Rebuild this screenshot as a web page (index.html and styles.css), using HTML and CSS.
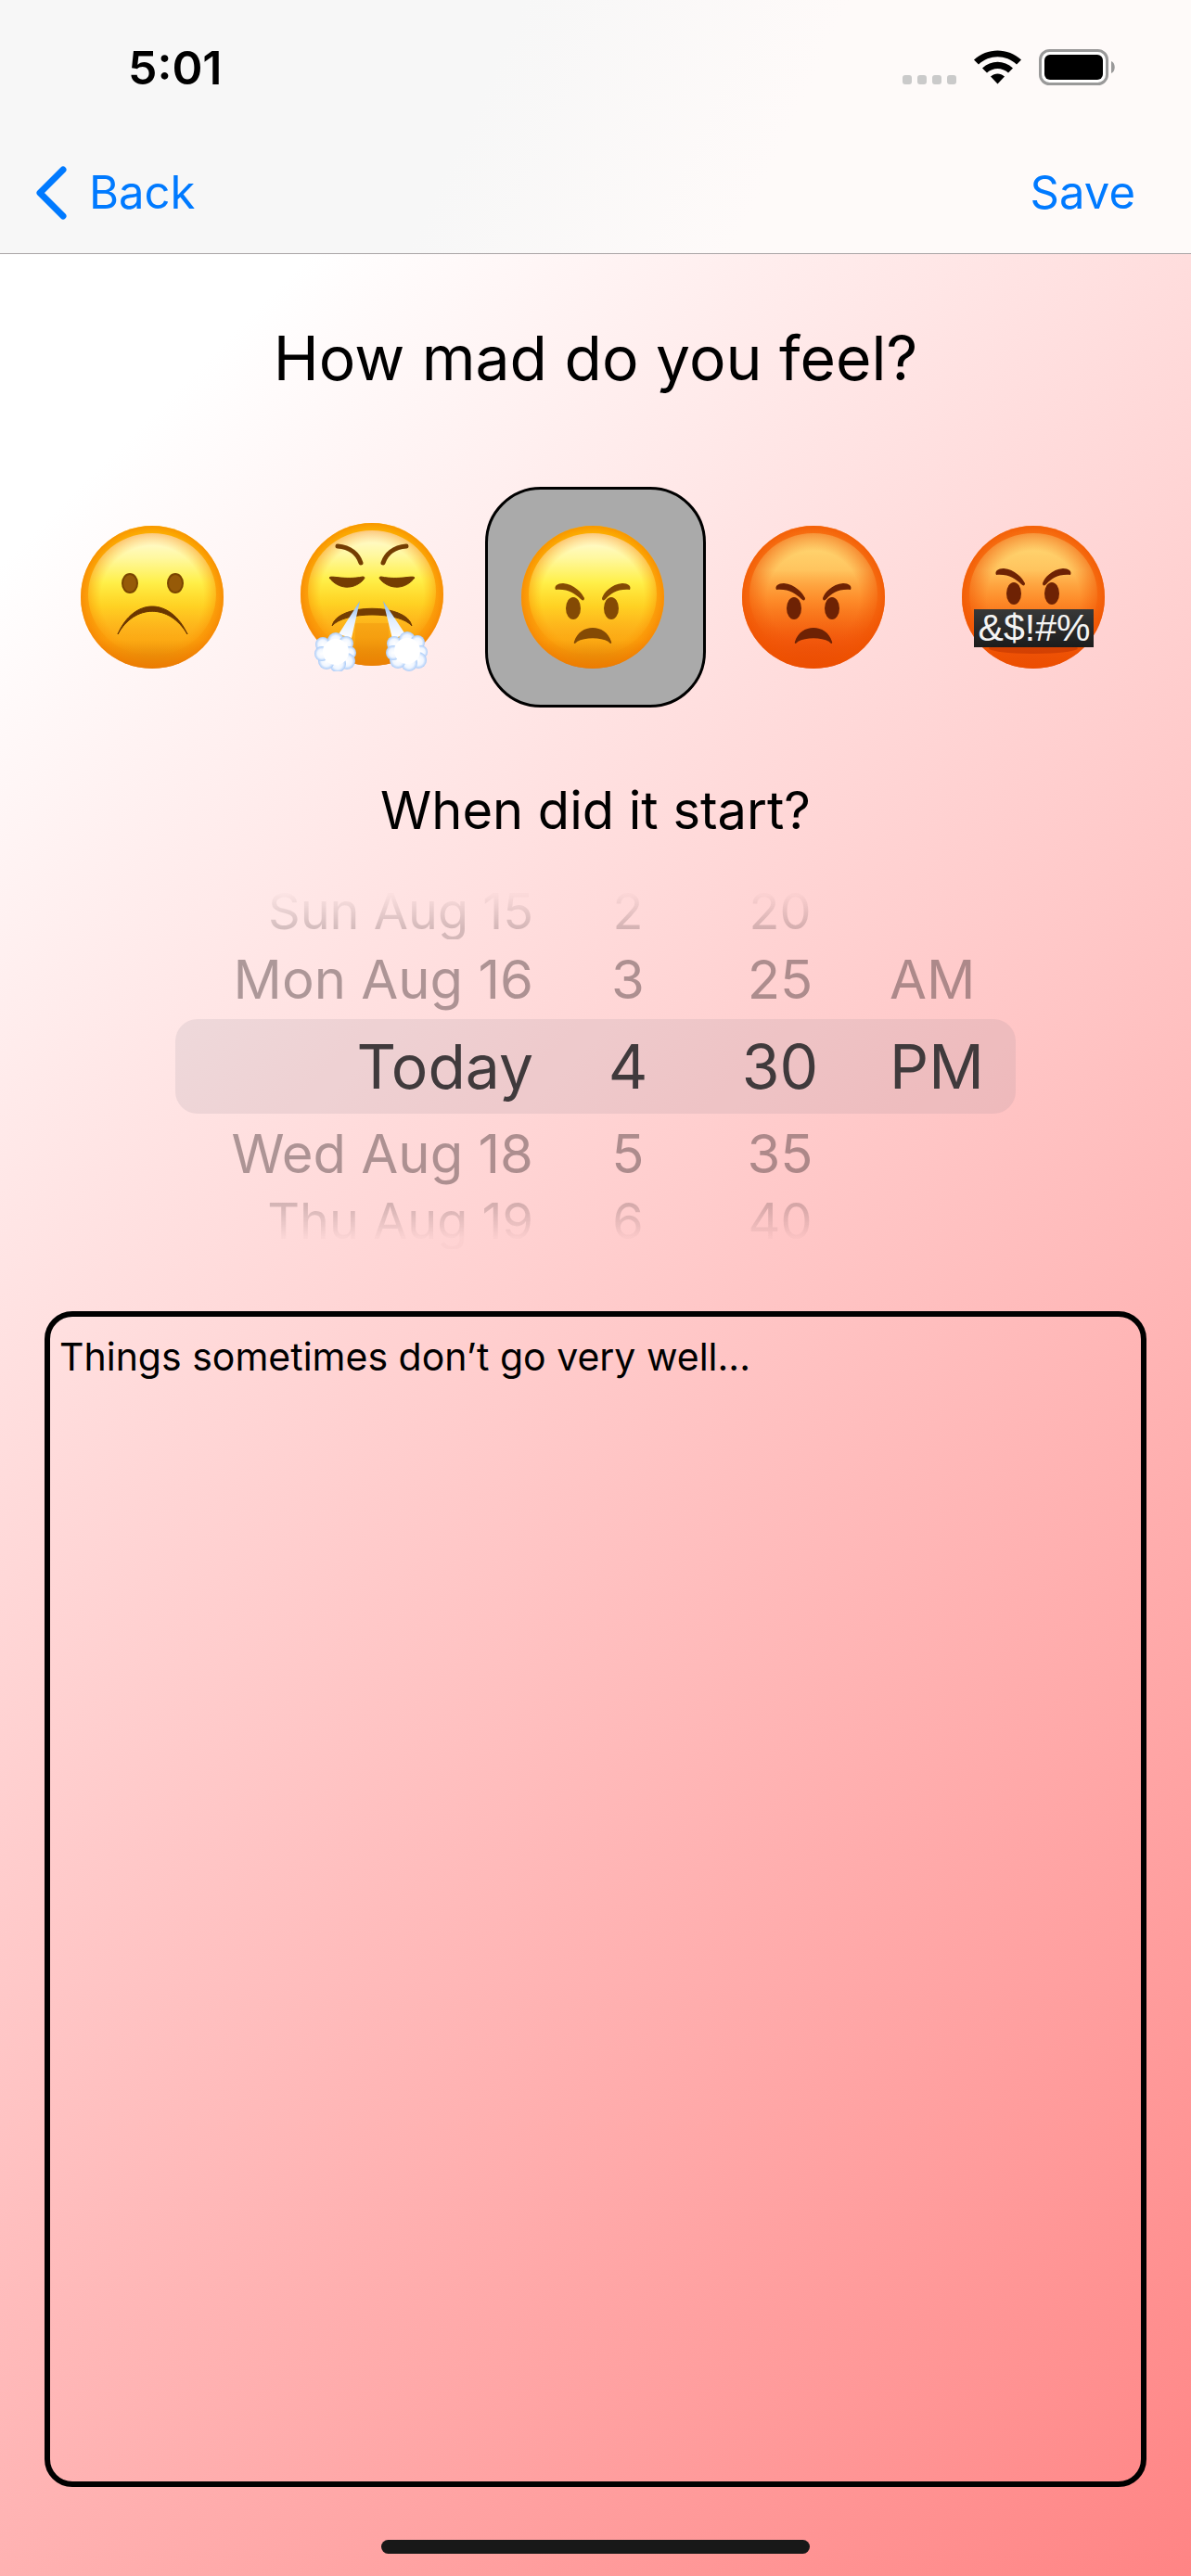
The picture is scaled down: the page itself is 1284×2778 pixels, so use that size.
FILE: index.html
```html
<!DOCTYPE html>
<html lang="en">
<head>
<meta charset="utf-8">
<meta name="viewport" content="width=device-width, initial-scale=1">
<title>How mad do you feel?</title>
<link rel="stylesheet" href="styles.css">
</head>
<body>
<svg class="defs" aria-hidden="true">
  <defs>
    <linearGradient id="yellow" x1="0" y1="0" x2="0" y2="1">
      <stop offset="0" stop-color="#ffd000"/><stop offset=".15" stop-color="#ffc404"/><stop offset=".5" stop-color="#ffb213"/><stop offset=".8" stop-color="#fba40f"/><stop offset="1" stop-color="#d87505"/>
    </linearGradient>
    <linearGradient id="yellow-shine" x1="0" y1="0" x2="0" y2="1">
      <stop offset="0" stop-color="#fffbe0"/><stop offset=".2" stop-color="#fff8a0"/><stop offset=".4" stop-color="#fff04a"/><stop offset=".6" stop-color="#ffe02a" stop-opacity=".7"/><stop offset=".8" stop-color="#ffbe28" stop-opacity=".4"/><stop offset="1" stop-color="#ffb213" stop-opacity="0"/>
    </linearGradient>
    <radialGradient id="yellow-edge">
      <stop offset=".72" stop-color="#ff9800" stop-opacity="0"/><stop offset="1" stop-color="#f57e00" stop-opacity=".7"/>
    </radialGradient>
    <linearGradient id="orange" x1="0" y1="0" x2="0" y2="1">
      <stop offset="0" stop-color="#ff8c20"/><stop offset=".5" stop-color="#fc7d1c"/><stop offset=".8" stop-color="#f2580c"/><stop offset="1" stop-color="#e54400"/>
    </linearGradient>
    <linearGradient id="orange-shine" x1="0" y1="0" x2="0" y2="1">
      <stop offset="0" stop-color="#ffdc78"/><stop offset=".3" stop-color="#ffc862" stop-opacity=".95"/><stop offset=".55" stop-color="#ff9c38" stop-opacity=".5"/><stop offset=".9" stop-color="#f2600c" stop-opacity="0"/>
    </linearGradient>
    <radialGradient id="orange-edge">
      <stop offset=".65" stop-color="#f25a08" stop-opacity="0"/><stop offset="1" stop-color="#ef5200" stop-opacity=".75"/>
    </radialGradient>
    <radialGradient id="puff">
      <stop offset="0" stop-color="#fff"/><stop offset=".6" stop-color="#f0f6ff"/><stop offset="1" stop-color="#a8caf8"/>
    </radialGradient>
    <linearGradient id="jet" x1="0" y1="0" x2="0" y2="1">
      <stop offset="0" stop-color="#7fb0e8"/><stop offset=".5" stop-color="#e0edff"/><stop offset="1" stop-color="#fff"/>
    </linearGradient>
    <linearGradient id="censor" x1="0" y1="0" x2="0" y2="1">
      <stop offset="0" stop-color="#383838"/><stop offset="1" stop-color="#1c1c1c"/>
    </linearGradient>
    <g id="yellow-ball">
      <circle r="77" fill="url(#yellow)"/><ellipse cy="-3" rx="69" ry="66" fill="url(#yellow-shine)"/><circle r="77" fill="url(#yellow-edge)"/>
    </g>
    <g id="orange-ball">
      <circle r="77" fill="url(#orange)"/><ellipse cy="-3" rx="69" ry="66" fill="url(#orange-shine)"/><circle r="77" fill="url(#orange-edge)"/>
    </g>
    <g id="glare">
      <ellipse cx="-21" cy="12" rx="8" ry="12"/><ellipse cx="20" cy="12" rx="8" ry="12"/>
      <path d="M-40-8C-42-12-38-15-32-15C-20-14-12-5-9 1C-9 4-11 4-13 2C-20-4-26-9-40-8ZM40-8C42-12 38-15 32-15C20-14 12-5 10 1C10 4 12 4 14 2C20-4 26-9 40-8Z"/>
    </g>
    <path id="scowl" d="M-20 48C-14 28 14 28 20 48C21 51 18 50 17 48C8 43-8 43-17 48C-18 50-21 51-20 48Z"/>
    <g id="cloud">
      <circle cx="-14" cy="-8" r="8"/><circle cx="0" cy="-12" r="9"/><circle cx="11" cy="-9" r="8"/><circle cx="15" cy="1" r="7"/><circle cx="12" cy="10" r="9"/><circle cx="2" cy="13" r="9"/><circle cx="-10" cy="10" r="9"/><circle cx="-15" cy="2" r="8"/><circle r="14" fill="#fff"/>
    </g>
  </defs>
</svg>

<header class="top">
  <div class="status">
    <time class="clock" datetime="17:01">5:01</time>
    <svg class="indicators" width="230" height="40" viewBox="0 0 230 40" role="img" aria-label="No signal, Wi-Fi on, battery full">
      <g fill="#cacaca"><rect y="28" width="10" height="10" rx="3"/><rect x="16" y="28" width="10" height="10" rx="3"/><rect x="32" y="28" width="10" height="10" rx="3"/><rect x="48" y="28" width="10" height="10" rx="3"/></g>
      <path d="M77 11.500C91-2 114-2 128 11.500L123 16.500C111.500 5.500 93.500 5.500 82 16.500ZM86 20.500C95.500 11.500 109.500 11.500 119 20.500L114 25.500C107.500 19.500 97.500 19.500 91 25.500ZM95 29.500C99.500 25.500 105.500 25.500 110 29.500L102.500 37.500Z"/>
      <rect x="148.500" y="1.500" width="72" height="36" rx="10" fill="#fff" stroke="#999" stroke-width="3"/>
      <rect x="153" y="6" width="63" height="27" rx="6"/>
      <path d="M225 13C230 15 230 24 225 26Z" fill="#999"/>
    </svg>
  </div>
  <nav class="bar">
    <a class="back" href="#back">
      <svg width="34" height="58" viewBox="0 0 34 58" aria-hidden="true"><path d="M30 4L5 29L30 54" fill="none" stroke="#007aff" stroke-width="7" stroke-linecap="round" stroke-linejoin="round"/></svg>
      Back
    </a>
    <button class="save" type="submit" form="entry">Save</button>
  </nav>
</header>

<form class="entry" id="entry">
  <h1 class="title">How mad do you feel?</h1>
  <div class="moods" role="radiogroup" aria-label="How mad do you feel?">
    <label class="mood"><input type="radio" name="mood" aria-label="Frowning">
      <svg class="face" viewBox="-77 -80 160 160" aria-hidden="true">
        <use href="#yellow-ball"/>
        <g fill="#965a08" stroke="#7a4500" stroke-width="2"><ellipse cx="-24" cy="-15" rx="8" ry="10"/><ellipse cx="25" cy="-15" rx="8" ry="10"/></g>
        <path d="M-37 40C-20 0 20 0 38 40C19 7-19 7-37 40Z" fill="#6b3600" stroke="#6b3600"/>
      </svg>
    </label>
    <label class="mood"><input type="radio" name="mood" aria-label="Huffing">
      <svg class="face" viewBox="-77 -80 160 160" aria-hidden="true">
        <g transform="translate(0 -3)"><use href="#yellow-ball"/></g>
        <g fill="none" stroke="#743d02" stroke-width="5" stroke-linecap="round"><path d="M-37-55C-23-54-15-46-12-37"/><path d="M37-55C23-54 15-46 12-37"/></g>
        <path d="M-46-21C-44-24-30-18-10-22C-7-22-8-20-10-18C-20-8-36-8-46-21ZM46-21C44-24 30-18 10-22C7-22 8-20 10-18C20-8 36-8 46-21ZM-43 31C-38 6 38 6 43 31C30 15-30 15-43 31Z" fill="#743d02" stroke="#743d02"/>
        <path d="M-18 28H18V72Q0 76-18 72Z" fill="#ec8c08" opacity=".35"/>
        <path d="M-13 4L-22 44L-36 40ZM12 4L36 40L22 45Z" fill="url(#jet)"/>
        <g fill="url(#puff)"><g transform="translate(-39 59)"><use href="#cloud"/></g><g transform="translate(38 58)"><use href="#cloud"/></g></g>
      </svg>
    </label>
    <label class="mood"><input type="radio" name="mood" aria-label="Angry" checked>
      <svg class="face" viewBox="-77 -80 160 160" aria-hidden="true">
        <use href="#yellow-ball"/>
        <g fill="#844a04"><use href="#glare"/><use href="#scowl"/></g>
      </svg>
    </label>
    <label class="mood"><input type="radio" name="mood" aria-label="Enraged">
      <svg class="face" viewBox="-77 -80 160 160" aria-hidden="true">
        <use href="#orange-ball"/>
        <g fill="#6e2204"><use href="#glare"/><use href="#scowl"/></g>
      </svg>
    </label>
    <label class="mood"><input type="radio" name="mood" aria-label="Cursing">
      <svg class="face" viewBox="-77 -80 160 160" aria-hidden="true">
        <use href="#orange-ball"/>
        <g fill="#6e2204" transform="translate(0 -16)"><use href="#glare"/></g>
        <ellipse cy="55" rx="48" ry="6" fill="#b83000" opacity=".5"/>
        <rect x="-64" y="13" width="129" height="41" fill="url(#censor)"/>
        <text class="curse" x="1" y="47" text-anchor="middle">&amp;$!#%</text>
      </svg>
    </label>
  </div>

  <h2 class="subtitle">When did it start?</h2>
  <div class="picker" role="group" aria-label="When did it start?">
    <ul class="wheel wheel-date" role="listbox" aria-label="Date">
      <li class="far" role="option">Sun Aug 15</li>
      <li class="near" role="option">Mon Aug 16</li>
      <li class="current" role="option" aria-selected="true">Today</li>
      <li class="near" role="option">Wed Aug 18</li>
      <li class="far far-below" role="option">Thu Aug 19</li>
    </ul>
    <ul class="wheel" role="listbox" aria-label="Hour">
      <li class="far" role="option">2</li>
      <li class="near" role="option">3</li>
      <li class="current" role="option" aria-selected="true">4</li>
      <li class="near" role="option">5</li>
      <li class="far far-below" role="option">6</li>
    </ul>
    <ul class="wheel" role="listbox" aria-label="Minute">
      <li class="far" role="option">20</li>
      <li class="near" role="option">25</li>
      <li class="current" role="option" aria-selected="true">30</li>
      <li class="near" role="option">35</li>
      <li class="far far-below" role="option">40</li>
    </ul>
    <ul class="wheel wheel-period" role="listbox" aria-label="AM or PM">
      <li class="near" role="option">AM</li>
      <li class="current" role="option" aria-selected="true">PM</li>
    </ul>
  </div>

  <textarea class="notes" aria-label="Notes">Things sometimes don’t go very well...</textarea>
</form>
<div class="home"></div>
</body>
</html>
```

FILE: styles.css
```css
* {
  box-sizing: border-box;
}

body {
  margin: 0;
  min-height: 100vh;
  display: flex;
  flex-direction: column;
  font-family: Inter, "Liberation Sans", sans-serif;
  color: #000;
  background: linear-gradient(135deg, #fff 15%, #ff8484 100%);
}

.defs {
  position: absolute;
  width: 0;
  height: 0;
}

/* Status and navigation bars */
.top {
  border-bottom: 1px solid #aaa5a6;
  background: linear-gradient(115deg, #f7f7f7 40%, #fefaf9 65%);
}

.status {
  display: flex;
  align-items: center;
  justify-content: space-between;
  height: 146px;
  padding: 0 81px 0 138px;
}

.clock {
  font-size: 50px;
  font-weight: 600;
  line-height: 60px;
}

.bar {
  display: flex;
  align-items: center;
  justify-content: space-between;
  height: 127px;
  padding: 0 60px 4px 38px;
}

.back {
  display: flex;
  align-items: center;
  gap: 24px;
  color: #007aff;
  font-size: 49px;
  line-height: 60px;
  text-decoration: none;
}

.save {
  padding: 0;
  border: 0;
  background: none;
  color: #007aff;
  font: inherit;
  font-size: 49px;
  line-height: 60px;
}

/* Entry form */
.entry {
  flex: 1;
  display: flex;
  flex-direction: column;
  padding: 68px 48px 0;
}

.title,
.subtitle {
  margin: 0;
  font-weight: 400;
  text-align: center;
}

.title {
  font-size: 66px;
  line-height: 88px;
}

.moods {
  display: flex;
  justify-content: center;
  margin-top: 95px;
}

.mood {
  display: flex;
  align-items: center;
  justify-content: center;
  width: 238px;
  height: 238px;
  border: 3px solid transparent;
  border-radius: 60px;
}

.mood:has(:checked) {
  border-color: #000;
  background: #aaa;
}

.mood input {
  position: absolute;
  opacity: 0;
}

.face {
  width: 160px;
  height: 160px;
}

.curse {
  font-family: "Liberation Sans", sans-serif;
  font-size: 41px;
  fill: #f4f4f4;
}

.subtitle {
  margin-top: 75px;
  font-size: 56px;
  line-height: 72px;
}

/* Wheel date picker */
.picker {
  position: relative;
  align-self: center;
  display: grid;
  grid-template-columns: 386fr 204fr 124fr 192fr;
  align-items: center;
  width: 906px;
  max-width: 100%;
  margin-top: 43px;
}

.picker::before {
  content: "";
  position: absolute;
  top: 146px;
  left: 0;
  right: 0;
  height: 102px;
  border-radius: 24px;
  background: rgba(118, 118, 128, 0.12);
}

.wheel {
  margin: 0;
  padding: 0;
  height: 394px;
  list-style: none;
  text-align: center;
  white-space: nowrap;
}

.wheel-date {
  text-align: right;
}

.wheel-period {
  padding: 60px 0 0 56px;
  text-align: left;
}

.current {
  font-size: 66px;
  line-height: 102px;
  color: #3a3333;
}

.near {
  font-size: 58px;
  line-height: 86px;
  color: rgba(60, 45, 48, 0.42);
}

.far {
  font-size: 54px;
  line-height: 60px;
  color: transparent;
  background: linear-gradient(rgba(60, 45, 48, 0.02) 20%, rgba(60, 45, 48, 0.22) 80%);
  background-clip: text;
}

.far-below {
  background: linear-gradient(rgba(60, 45, 48, 0.22) 20%, rgba(60, 45, 48, 0.02) 80%);
  background-clip: text;
}

.notes {
  flex: 1;
  width: 100%;
  margin-top: 67px;
  padding: 18px 10px;
  border: 6px solid #000;
  border-radius: 30px;
  background: none;
  color: #000;
  font: inherit;
  font-size: 41px;
  line-height: 50px;
  resize: none;
  outline: none;
}

.home {
  align-self: center;
  width: 36%;
  height: 15px;
  margin: 57px 0 24px;
  border-radius: 8px;
  background: #181818;
}
```
